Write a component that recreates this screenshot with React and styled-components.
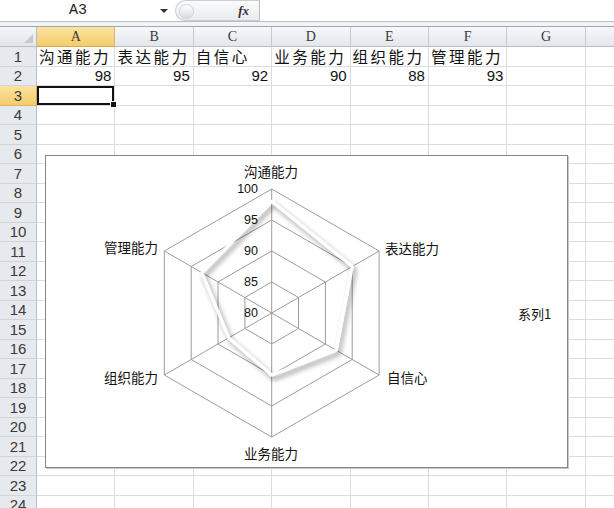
import React from 'react';
import styled, { createGlobalStyle } from 'styled-components';

const GlobalStyle = createGlobalStyle`
  html, body {
    margin: 0;
    padding: 0;
    background: #ffffff;
    overflow: hidden;
  }
  body {
    font-family: "Liberation Sans", "Noto Sans CJK SC", sans-serif;
  }
`;

const CJK = `"Noto Sans CJK SC", "Liberation Sans", sans-serif`;

const Page = styled.div`
  width: 614px;
  height: 508px;
  overflow: hidden;
  display: flex;
  flex-direction: column;
  background: #fff;
`;

const FormulaBar = styled.div`
  flex-shrink: 0;
  height: 21px;
  display: flex;
  align-items: stretch;
  background: #fff;
  border-bottom: 1px solid #b7bcc4;
`;

const NameBox = styled.div`
  width: 156px;
  display: flex;
  align-items: center;
  justify-content: center;
  font-family: "Liberation Mono", monospace;
  font-size: 15px;
  color: #222;
`;

const NameArrow = styled.div`
  width: 16px;
  display: flex;
  align-items: center;
  justify-content: center;
  &::after {
    content: '';
    border-left: 4px solid transparent;
    border-right: 4px solid transparent;
    border-top: 4px solid #333;
  }
`;

const FxGroup = styled.div`
  width: 85px;
  margin-left: 3px;
  display: flex;
  align-items: center;
  justify-content: flex-end;
  padding-right: 10px;
  box-sizing: border-box;
  border-radius: 11px 0 0 11px;
  border: 1px solid #c9cdd3;
  border-right: 1px solid #b7bcc4;
  background: linear-gradient(#fbfbfc, #e9ebee);
  position: relative;
`;

const FxKnob = styled.div`
  position: absolute;
  left: 3px;
  top: 3px;
  width: 13px;
  height: 13px;
  border-radius: 50%;
  background: linear-gradient(#ffffff, #d8dce1);
  border: 1px solid #cfd3d8;
`;

const FxLabel = styled.span`
  font-family: "Liberation Serif", serif;
  font-style: italic;
  font-weight: bold;
  font-size: 13px;
  color: #333;
`;

const FormulaInput = styled.div`
  flex: 1;
  background: #fff;
`;

const Strip = styled.div`
  flex-shrink: 0;
  height: 4px;
  background: #f3f4f6;
  border-bottom: 1px solid #9ea6b0;
`;

const Sheet = styled.div`
  flex-shrink: 0;
  position: relative;
  display: grid;
  grid-template-columns: 37px repeat(8, 78.4px);
  grid-template-rows: 20px;
  grid-auto-rows: 19.5px;
`;

const Corner = styled.div`
  background: linear-gradient(#f4f5f7, #e2e5ea);
  border-right: 1px solid #b8bec6;
  border-bottom: 1px solid #b8bec6;
  box-sizing: border-box;
  position: relative;
  &::after {
    content: '';
    position: absolute;
    right: 3px;
    bottom: 3px;
    border-left: 9px solid transparent;
    border-bottom: 9px solid #c5c9ce;
  }
`;

const ColHeader = styled.div`
  display: flex;
  align-items: center;
  justify-content: center;
  box-sizing: border-box;
  font-family: "Liberation Serif", serif;
  font-size: 14px;
  color: #3a3a3a;
  border-right: 1px solid ${(p) => (p.$active ? '#e0b460' : '#c5cad1')};
  border-bottom: 1px solid ${(p) => (p.$active ? '#d7a94f' : '#b8bec6')};
  background: ${(p) =>
    p.$active
      ? 'linear-gradient(#fbe3a0, #f4cc6c)'
      : 'linear-gradient(#f7f8fa, #e3e6eb)'};
`;

const RowHeader = styled.div`
  display: flex;
  align-items: center;
  justify-content: center;
  box-sizing: border-box;
  font-family: "Liberation Sans", sans-serif;
  font-size: 15px;
  color: #3a3a3a;
  border-right: 1px solid ${(p) => (p.$active ? '#d7a94f' : '#b8bec6')};
  border-bottom: 1px solid ${(p) => (p.$active ? '#e0b460' : '#cfd4da')};
  background: ${(p) =>
    p.$active ? 'linear-gradient(#fbe3a0, #f4cc6c)' : '#e6e9ee'};
`;

const Cell = styled.div`
  position: relative;
  display: flex;
  align-items: center;
  justify-content: ${(p) => (p.$align === 'right' ? 'flex-end' : 'flex-start')};
  padding: 0 3px 0 2px;
  box-sizing: border-box;
  white-space: nowrap;
  border-right: 1px solid #dadcdf;
  border-bottom: 1px solid #dadcdf;
  font-family: ${(p) => (p.$cjk ? CJK : '"Liberation Sans", sans-serif')};
  font-size: ${(p) => (p.$cjk ? '15.5px' : '15px')};
  letter-spacing: ${(p) => (p.$cjk ? '2.5px' : '0')};
  color: #111;
  ${(p) =>
    p.$selected &&
    `
    box-shadow: inset 0 0 0 2px #111;
    &::after {
      content: '';
      position: absolute;
      right: -3px;
      bottom: -3px;
      width: 5px;
      height: 5px;
      background: #111;
      border: 1px solid #fff;
      z-index: 2;
    }
  `}
`;

const ChartFrame = styled.div`
  position: absolute;
  left: 45px;
  top: 128px;
  width: 523px;
  height: 313px;
  box-sizing: border-box;
  background: #fff;
  border: 1px solid #868686;
  box-shadow: 1px 1px 0 #c8c8c8;
  z-index: 3;
`;

const COLS = ['A', 'B', 'C', 'D', 'E', 'F', 'G', ''];
const LABELS = ['沟通能力', '表达能力', '自信心', '业务能力', '组织能力', '管理能力'];
const VALUES = [98, 95, 92, 90, 88, 93];
const ROWS = 24;

const CX = 225.7;
const CY = 157;
const R = 124;
const MIN = 80;
const MAX = 100;

const pt = (i, v) => {
  const a = (-90 + i * 60) * (Math.PI / 180);
  const r = ((v - MIN) / (MAX - MIN)) * R;
  return [CX + r * Math.cos(a), CY + r * Math.sin(a)];
};

const ring = (v) =>
  LABELS.map((_, i) => pt(i, v).map((n) => n.toFixed(1)).join(',')).join(' ');

const labelPos = [
  { x: 225, y: 15, anchor: 'middle' },
  { x: 339, y: 92, anchor: 'start' },
  { x: 341, y: 221, anchor: 'start' },
  { x: 225, y: 297, anchor: 'middle' },
  { x: 112, y: 221, anchor: 'end' },
  { x: 112, y: 91, anchor: 'end' },
];

const RadarChart = () => (
  <svg width="521" height="311" viewBox="0 0 521 311">
    <defs>
      <filter id="lineShadow" x="-20%" y="-20%" width="140%" height="140%">
        <feDropShadow dx="2.5" dy="3.5" stdDeviation="2.6" floodColor="#000" floodOpacity="0.45" />
      </filter>
    </defs>
    {[85, 90, 95, 100].map((v) => (
      <polygon key={v} points={ring(v)} fill="none" stroke="#9c9c9c" strokeWidth="1" />
    ))}
    {LABELS.map((_, i) => {
      const [x, y] = pt(i, MAX);
      return <line key={i} x1={CX} y1={CY} x2={x} y2={y} stroke="#9c9c9c" strokeWidth="1" />;
    })}
    <polygon
      points={VALUES.map((v, i) => pt(i, v).join(',')).join(' ')}
      fill="none"
      stroke="#ffffff"
      strokeWidth="3"
      strokeLinejoin="round"
      filter="url(#lineShadow)"
    />
    {[80, 85, 90, 95, 100].map((v) => (
      <text
        key={v}
        x="212"
        y={pt(0, v)[1]}
        textAnchor="end"
        dominantBaseline="central"
        fontFamily='"Liberation Sans", sans-serif'
        fontSize="12.5"
        fill="#111"
      >
        {v}
      </text>
    ))}
    {LABELS.map((l, i) => (
      <text
        key={l}
        x={labelPos[i].x}
        y={labelPos[i].y}
        textAnchor={labelPos[i].anchor}
        dominantBaseline="central"
        fontFamily={CJK}
        fontSize="13.5"
        fill="#111"
      >
        {l}
      </text>
    ))}
    <text
      x="472"
      y="157"
      dominantBaseline="central"
      fontFamily={CJK}
      fontSize="13"
      fill="#111"
    >
      系列1
    </text>
  </svg>
);

const App = () => {
  const rows = [];
  for (let r = 1; r <= ROWS; r++) {
    rows.push(
      <RowHeader key={`h${r}`} $active={r === 3}>
        {r}
      </RowHeader>
    );
    COLS.forEach((c, ci) => {
      let content = null;
      let cjk = false;
      let align = 'left';
      if (r === 1 && ci < LABELS.length) {
        content = LABELS[ci];
        cjk = true;
      }
      if (r === 2 && ci < VALUES.length) {
        content = VALUES[ci];
        align = 'right';
      }
      rows.push(
        <Cell key={`${r}-${ci}`} $cjk={cjk} $align={align} $selected={r === 3 && ci === 0}>
          {content}
        </Cell>
      );
    });
  }

  return (
    <Page>
      <GlobalStyle />
      <FormulaBar>
        <NameBox>A3</NameBox>
        <NameArrow />
        <FxGroup>
          <FxKnob />
          <FxLabel>fx</FxLabel>
        </FxGroup>
        <FormulaInput />
      </FormulaBar>
      <Strip />
      <Sheet>
        <Corner />
        {COLS.map((c, i) => (
          <ColHeader key={i} $active={c === 'A'}>
            {c}
          </ColHeader>
        ))}
        {rows}
        <ChartFrame>
          <RadarChart />
        </ChartFrame>
      </Sheet>
    </Page>
  );
};

export default App;
